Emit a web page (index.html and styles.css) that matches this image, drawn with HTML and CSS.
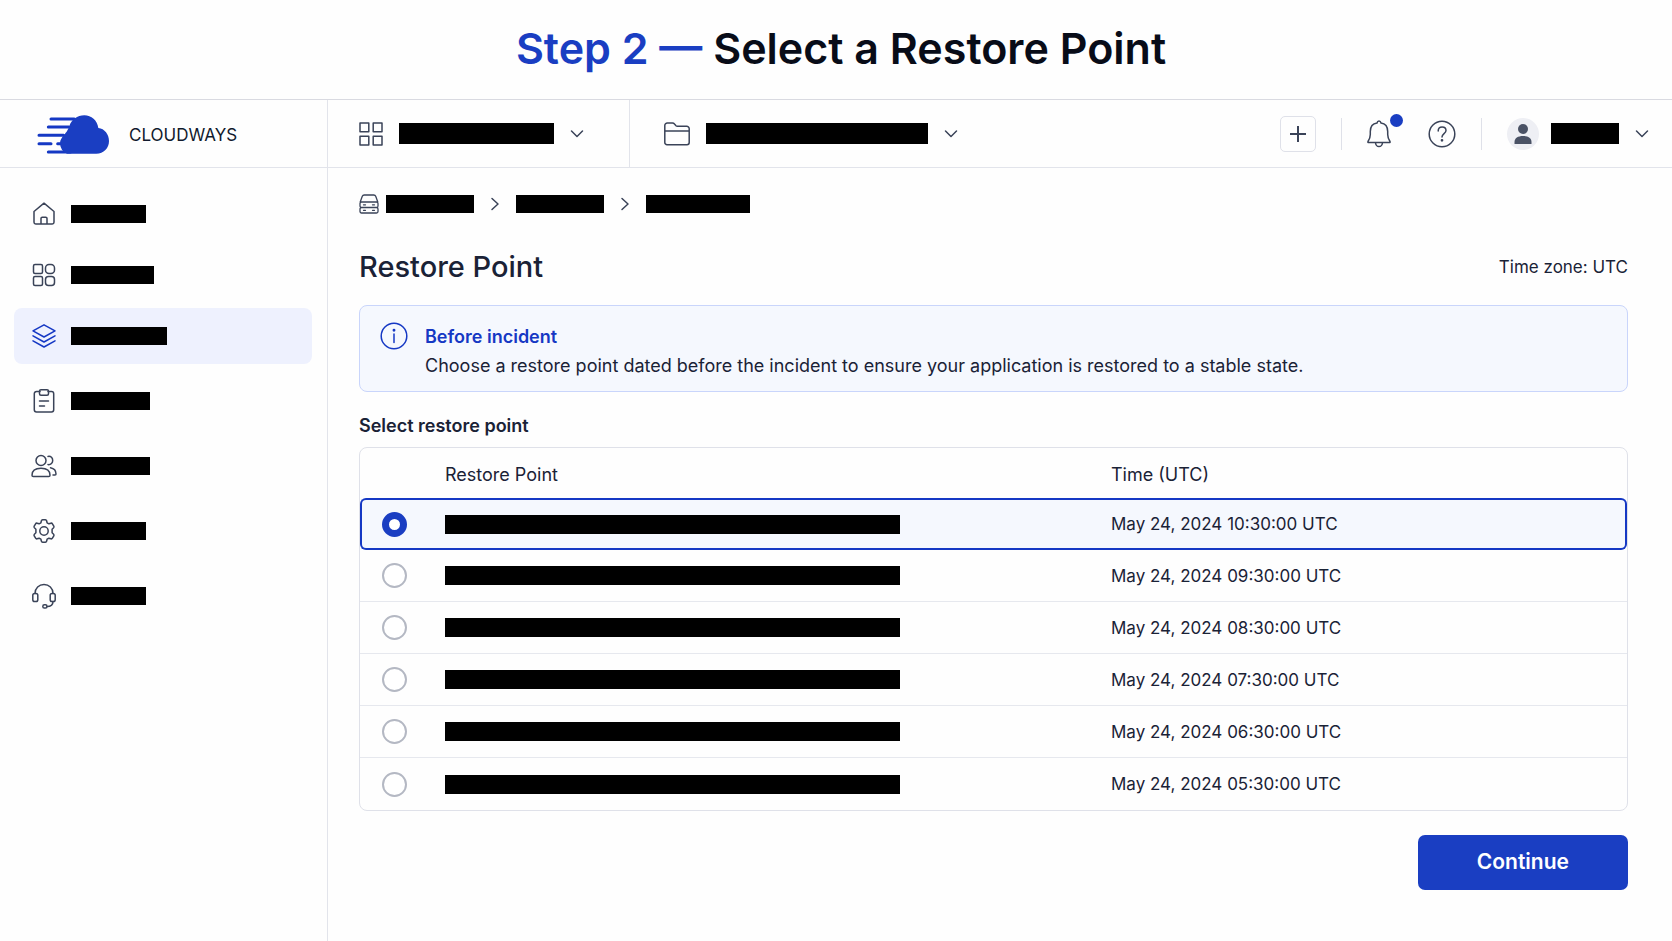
FILE: index.html
```html
<!DOCTYPE html>
<html lang="en">
<head>
<meta charset="utf-8">
<title>Restore Point - Cloudways</title>
<link rel="stylesheet" href="styles.css">
</head>
<body>
<header class="step">
  <p class="step-title"><span class="step-number">Step 2 —</span> Select a Restore Point</p>
</header>

<div class="app">
  <aside class="sidebar">
    <a class="brand" href="#">
      <svg class="brand-logo" width="72" height="39" viewBox="0 0 216 117" aria-hidden="true">
        <path d="M42 12H112M34 36H96M6 61H80M6 86H42M62 86H72M34 111H100" fill="none" stroke="#1538c4" stroke-width="9" stroke-linecap="round"/>
        <path d="M90 116C77 110 70 99 69 86C69 74 74 68 82 59C90 50 92 46 97 34C103 14 121 1 142 1C163 1 181 16 184 39C203 41 216 58 216 78C216 100 200 116 178 116Z" fill="#1a3ec2"/>
      </svg>
      <span>CLOUDWAYS</span>
    </a>
    <nav class="nav" aria-label="Main">
      <ul class="nav-list">
        <li><a class="nav-link" href="#" aria-label="Home">
          <svg class="icon" viewBox="0 0 24 24"><path d="M2 9.5 12 1.2 22 9.5V20.3a1.7 1.7 0 0 1-1.7 1.7H3.7A1.7 1.7 0 0 1 2 20.3ZM9 22v-5.5a1.3 1.3 0 0 1 1.3-1.3h3.4a1.3 1.3 0 0 1 1.3 1.3V22"/></svg>
          <span class="bar bar-75"></span></a></li>
        <li><a class="nav-link" href="#" aria-label="Applications">
          <svg class="icon" viewBox="0 0 24 24"><rect x="1.5" y="1.5" width="9" height="9" rx="1.5"/><rect x="13.5" y="1.5" width="9" height="9" rx="3.5"/><rect x="1.5" y="13.5" width="9" height="9" rx="1.5"/><rect x="13.5" y="13.5" width="9" height="9" rx="3"/></svg>
          <span class="bar bar-83"></span></a></li>
        <li><a class="nav-link active" href="#" aria-label="Backups" aria-current="page">
          <svg class="icon" viewBox="0 0 24 24"><path d="M12 .8 23 6.9 12 13 1 6.9ZM1 11.8l11 6.2 11-6.2M1 16.8 12 23l11-6.2"/></svg>
          <span class="bar bar-96"></span></a></li>
      </ul>
      <ul class="nav-list nav-more">
        <li><a class="nav-link" href="#" aria-label="Reports">
          <svg class="icon" viewBox="0 0 24 24"><path d="M8 2.5H4.5a2.2 2.2 0 0 0-2.2 2.2v16.100A2.200 2.200 0 0 0 4.500 23h15a2.200 2.200 0 0 0 2.200-2.200V4.700a2.200 2.200 0 0 0-2.200-2.200H16M7.500 12h9M7.500 17h5"/><rect x="7.5" y=".8" width="9" height="5.5" rx="1.5"/></svg>
          <span class="bar bar-79"></span></a></li>
        <li><a class="nav-link" href="#" aria-label="Team">
          <svg class="icon" viewBox="0 0 24 24"><circle cx="9" cy="6.5" r="5"/><path d="M0 21.2c0-4.500 3.500-7 9-7s9 2.500 9 7c0 .8-.5 1.300-1.300 1.300H1.300C.5 22.500 0 22 0 21.200ZM16 2.400c3-.6 4.700 1.700 4.700 4s-1.700 4.500-4.700 4.200M18.500 13.800c3 .6 5.500 3 5.500 6.200 0 .7-.4 1-1 1h-2"/></svg>
          <span class="bar bar-79"></span></a></li>
        <li><a class="nav-link" href="#" aria-label="Settings">
          <svg class="icon" viewBox="0 0 24 24"><path d="M9.400 1.800Q9.600.8 10.600.8h2.800q1 0 1.200 1l.5 2 1.800 1 2-.6q1-.3 1.500.6l1.400 2.400q.5.900-.2 1.600L20.100 10.200v3.600l1.500 1.400q.7.700.2 1.600l-1.400 2.400q-.5.900-1.500.6l-2-.6-1.800 1-.5 2q-.2 1-1.200 1h-2.800q-1 0-1.200-1l-.5-2-1.800-1-2 .6q-1 .3-1.500-.6L2.200 16.800q-.5-.9.2-1.600L3.900 13.800v-3.600L2.400 8.800q-.7-.7-.2-1.600L3.600 4.800q.5-.9 1.500-.6l2 .6 1.800-1Z"/><circle cx="12" cy="12" r="4.2"/></svg>
          <span class="bar bar-75"></span></a></li>
        <li><a class="nav-link" href="#" aria-label="Support">
          <svg class="icon" viewBox="0 0 24 24"><path d="M3 9.500C3 4 7 .5 12 .5s9 3.500 9 9M21 17.500c0 3.500-2.500 5-6 5"/><rect x=".8" y="9.5" width="5" height="8" rx="1.8"/><rect x="18.2" y="9.5" width="5" height="8" rx="1.8"/><rect x="10.8" y="20.8" width="4.2" height="3.2" rx="1.6"/></svg>
          <span class="bar bar-75"></span></a></li>
      </ul>
    </nav>
  </aside>

  <div class="content">
    <div class="topbar">
      <button class="switcher switcher-app" type="button" aria-label="Switch application">
        <svg class="icon" viewBox="0 0 24 24"><path d="M1 1h8.800v8.800H1ZM14.200 1H23v8.800h-8.800ZM1 14.200h8.800V23H1ZM14.200 14.200H23V23h-8.800Z"/></svg>
        <span class="bar bar-tall bar-155"></span>
        <svg class="chevron" viewBox="0 0 14 14"><path d="m1.500 4 5.500 5.500L12.500 4"/></svg>
      </button>
      <button class="switcher" type="button" aria-label="Switch project">
        <svg class="icon icon-folder" viewBox="0 0 26 24"><path d="M.8 20V3.500A2.500 2.500 0 0 1 3.300 1h5.200c1 0 1.500.4 2 1l1.500 1.700q.5.500 1.300.5h9.400a2.500 2.500 0 0 1 2.500 2.500V20.500a2.200 2.200 0 0 1-2.200 2.200H3A2.200 2.200 0 0 1 .8 20.500ZM.8 9h24.400"/></svg>
        <span class="bar bar-tall bar-222"></span>
        <svg class="chevron" viewBox="0 0 14 14"><path d="m1.500 4 5.500 5.500L12.500 4"/></svg>
      </button>
      <div class="actions">
        <button class="add" type="button" aria-label="Add">
          <svg class="icon-plus" viewBox="0 0 16 16"><path d="M8 .5v15M.5 8h15"/></svg>
        </button>
        <span class="divider"></span>
        <button class="plain bell" type="button" aria-label="Notifications">
          <svg class="icon-bell" viewBox="0 0 24 28"><path d="M1 21.500c1.700-2.500 2.300-4 2.300-7v-3C3.300 6 6.500 3.500 10 3c.3-1.300 1-2 2-2s1.700.7 2 2c3.500.5 6.700 3 6.700 8.500v3c0 3 .6 4.500 2.300 7 .3.600 0 1-.7 1H1.700c-.7 0-1-.4-.7-1ZM8.500 23c.3 2 1.500 3.500 3.500 3.500s3.200-1.500 3.500-3.500"/></svg>
          <span class="dot"></span>
        </button>
        <button class="plain help" type="button" aria-label="Help">
          <svg class="icon-round" viewBox="0 0 28 28"><circle cx="14" cy="14" r="12.8"/><path d="M10.200 11c0-2.600 1.600-4 3.900-4s3.900 1.400 3.900 3.600c0 3-4 3.200-4 6.400"/><circle class="fill" cx="14" cy="20.3" r=".6"/></svg>
        </button>
        <span class="divider"></span>
        <button class="plain user" type="button" aria-label="Account">
          <svg class="avatar" width="32" height="32" viewBox="0 0 32 32"><circle cx="16" cy="16" r="16" fill="#eeeff4"/><circle cx="16" cy="11" r="5" fill="#4a5265"/><path d="M7.500 26v-2c0-4 3.500-6 8.500-6s8.500 2 8.500 6v2Z" fill="#4a5265"/></svg>
          <span class="bar bar-tall bar-68"></span>
          <svg class="chevron" viewBox="0 0 14 14"><path d="m1.500 4 5.500 5.500L12.500 4"/></svg>
        </button>
      </div>
    </div>

    <main class="main">
      <nav class="crumbs" aria-label="Breadcrumb">
        <a class="crumb" href="#" aria-label="Servers">
          <svg class="icon-server" viewBox="0 0 20 20"><path d="M1.200 8 3.300 2.300Q3.800 1 5.200 1h9.600q1.400 0 1.900 1.300L18.800 8M2.500 8h15a1.500 1.500 0 0 1 1.500 1.500v2.500a1.500 1.500 0 0 1-1.500 1.500h-15A1.500 1.500 0 0 1 1 12V9.500A1.500 1.500 0 0 1 2.500 8ZM2.500 13.500h15A1.500 1.500 0 0 1 19 15v2.500a1.500 1.500 0 0 1-1.500 1.500h-15A1.500 1.500 0 0 1 1 17.500V15a1.500 1.500 0 0 1 1.500-1.500ZM4.500 10.800h2M13.500 10.800h2M4.500 16.300h2M13.500 16.300h2"/></svg>
          <span class="bar bar-88"></span>
        </a>
        <svg class="chevron" viewBox="0 0 14 14"><path d="m4 1.500 6 5.500-6 5.500"/></svg>
        <a class="crumb" href="#" aria-label="Server"><span class="bar bar-88"></span></a>
        <svg class="chevron" viewBox="0 0 14 14"><path d="m4 1.500 6 5.500-6 5.500"/></svg>
        <a class="crumb" href="#" aria-label="Application"><span class="bar bar-104"></span></a>
      </nav>

      <div class="heading">
        <h1>Restore Point</h1>
        <span class="timezone">Time zone: UTC</span>
      </div>

      <section class="notice">
        <svg class="icon-round" viewBox="0 0 28 28"><circle cx="14" cy="14" r="12.8"/><path d="M14 12v8.500"/><circle class="fill" cx="14" cy="8.3" r=".7"/></svg>
        <div>
          <h2 class="notice-title">Before incident</h2>
          <p class="notice-text">Choose a restore point dated before the incident to ensure your application is restored to a stable state.</p>
        </div>
      </section>

      <form>
        <h2 class="label" id="points-label">Select restore point</h2>
        <div class="points">
          <table aria-labelledby="points-label">
            <colgroup><col class="col-pick"><col><col class="col-time"></colgroup>
            <thead>
              <tr><td></td><th scope="col">Restore Point</th><th scope="col">Time (UTC)</th></tr>
            </thead>
            <tbody>
              <tr class="selected">
                <td><input type="radio" name="point" id="p1" aria-labelledby="t1" checked></td>
                <td><label for="p1"><span class="bar bar-point"></span></label></td>
                <td id="t1">May 24, 2024 10:30:00 UTC</td>
              </tr>
              <tr>
                <td><input type="radio" name="point" id="p2" aria-labelledby="t2"></td>
                <td><label for="p2"><span class="bar bar-point"></span></label></td>
                <td id="t2">May 24, 2024 09:30:00 UTC</td>
              </tr>
              <tr>
                <td><input type="radio" name="point" id="p3" aria-labelledby="t3"></td>
                <td><label for="p3"><span class="bar bar-point"></span></label></td>
                <td id="t3">May 24, 2024 08:30:00 UTC</td>
              </tr>
              <tr>
                <td><input type="radio" name="point" id="p4" aria-labelledby="t4"></td>
                <td><label for="p4"><span class="bar bar-point"></span></label></td>
                <td id="t4">May 24, 2024 07:30:00 UTC</td>
              </tr>
              <tr>
                <td><input type="radio" name="point" id="p5" aria-labelledby="t5"></td>
                <td><label for="p5"><span class="bar bar-point"></span></label></td>
                <td id="t5">May 24, 2024 06:30:00 UTC</td>
              </tr>
              <tr>
                <td><input type="radio" name="point" id="p6" aria-labelledby="t6"></td>
                <td><label for="p6"><span class="bar bar-point"></span></label></td>
                <td id="t6">May 24, 2024 05:30:00 UTC</td>
              </tr>
            </tbody>
          </table>
        </div>
        <div class="form-actions">
          <button class="continue" type="submit">Continue</button>
        </div>
      </form>
    </main>
  </div>
</div>
</body>
</html>
```

FILE: styles.css
```css
* {box-sizing:border-box;}

body {
  margin:0;
  min-height:100vh;
  display:flex;
  flex-direction:column;
  font-family:Inter,"Liberation Sans",sans-serif;
  font-size:18px;
  line-height:24px;
  color:#1a2236;
  background:#fefefe;
}
h1, h2, p, ul {margin:0;padding:0;}
ul {list-style:none;}
a {color:inherit;text-decoration:none;}
button {font:inherit;color:inherit;background:none;border:0;padding:0;cursor:pointer;}
svg {flex:none;fill:none;stroke:#3a4358;stroke-width:1.5;stroke-linecap:round;stroke-linejoin:round;}

/* step banner */
.step {padding:20px 0 23px 10px;border-bottom:1px solid #d9dae1;text-align:center;}
.step-title {font-size:43px;line-height:56px;font-weight:600;color:#080c18;}
.step-number {color:#1a3ec2;}

.app {flex:1;display:flex;}
.sidebar {flex:none;width:328px;border-right:1px solid #e2e4eb;}
.content {flex:1;min-width:0;}

.brand {
  display:flex;
  align-items:center;
  gap:20px;
  height:68px;
  padding:2px 0 0 37px;
  border-bottom:1px solid #e2e4eb;
  color:#111a2e;
  font-size:17px;
}
.brand svg {stroke:none;}

/* side navigation */
.nav {padding:18px 15px 18px 14px;}
.nav-list {display:flex;flex-direction:column;gap:5px;}
.nav-more {margin-top:9px;gap:9px;}
.nav-link {
  display:flex;
  align-items:center;
  gap:15px;
  height:56px;
  padding-left:18px;
  border-radius:8px;
}
.nav-link.active {background:#eef1fe;}
.nav-link.active svg {stroke:#1538c4;}

.icon {width:24px;height:24px;overflow:visible;}
.icon-folder {width:26px;}
.icon-round {width:28px;height:28px;}
.icon-bell {width:24px;height:28px;}
.icon-plus {width:16px;height:16px;stroke-width:2;}
.icon-server {width:20px;height:20px;stroke-width:1.3;}
.chevron {width:14px;height:14px;}
.avatar {stroke:none;}
.fill {fill:#3a4358;}

/* masked names */
.bar {display:block;height:18px;background:#000;}
.bar-tall {height:21px;}
.bar-68 {width:68px;}
.bar-75 {width:75px;}
.bar-79 {width:79px;}
.bar-83 {width:83px;}
.bar-88 {width:88px;}
.bar-96 {width:96px;}
.bar-104 {width:104px;}
.bar-155 {width:155px;}
.bar-222 {width:222px;}
.bar-point {width:455px;max-width:100%;height:19px;}

/* top bar */
.topbar {display:flex;height:68px;border-bottom:1px solid #e2e4eb;}
.switcher {display:flex;align-items:center;gap:16px;padding-left:34px;}
.switcher-app {width:302px;padding-left:31px;border-right:1px solid #e2e4eb;}
.actions {display:flex;align-items:center;margin-left:auto;padding-right:23px;}
.add {
  display:flex;
  align-items:center;
  justify-content:center;
  width:36px;
  height:36px;
  border:1px solid #dfe1e9;
  border-radius:5px;
}
.divider {width:1px;height:32px;margin:0 25px;background:#dfe1e9;}
.plain {display:flex;align-items:center;}
.bell {position:relative;}
.dot {position:absolute;top:-6px;right:-12px;width:13px;height:13px;border-radius:50%;background:#1a3ec2;}
.help {margin-left:37px;}
.user {gap:12px;}
.user .chevron {margin-left:4px;}

/* page */
.main {padding:26px 44px 40px 31px;}
.crumbs {display:flex;align-items:center;gap:14px;}
.crumb {display:flex;align-items:center;gap:7px;}
.heading {display:flex;align-items:center;justify-content:space-between;margin:33px 0 18px;}
h1 {font-size:29px;line-height:40px;font-weight:500;}
.timezone {font-size:17px;}

.notice {
  display:flex;
  gap:17px;
  padding:16px 20px 11px;
  border:1px solid #c9d5fb;
  border-radius:8px;
  background:#f5f8fe;
}
.notice svg {stroke:#1538c4;}
.notice .fill {fill:#1538c4;}
.notice-title {font-size:18px;line-height:29px;font-weight:600;color:#1538c4;}
.notice-text {line-height:29px;}

.label {margin:22px 0 9px;font-size:18px;line-height:24px;font-weight:600;}
.points {border:1px solid #dfe1e9;border-radius:8px;}
table {width:100%;border-collapse:separate;border-spacing:0;table-layout:fixed;}
.col-pick {width:85px;}
.col-time {width:516px;}
th {height:50px;padding:4px 0 0;font-weight:400;text-align:left;}
td {height:52px;padding:0;border-bottom:1px solid #e6e8ee;font-size:17px;}
thead td {height:50px;border:0;}
tbody tr:last-child td {border-bottom:0;}
td:first-child {padding-left:22px;}
.selected td {background:#f5f8fe;border:solid #1538c4;border-width:2px 0;}
.selected td:first-child {padding-left:20px;border-left-width:2px;border-radius:6px 0 0 6px;}
.selected td:last-child {border-right-width:2px;border-radius:0 6px 6px 0;}

input[type=radio] {
  appearance:none;
  display:block;
  width:25px;
  height:25px;
  margin:0;
  border:2px solid #b4b8c3;
  border-radius:50%;
  background:#fff;
}
input[type=radio]:checked {border:7px solid #1a3ec2;}

.form-actions {display:flex;justify-content:flex-end;margin-top:24px;}
.continue {
  padding:15px 59px 16px;
  border-radius:7px;
  background:#1a3ec2;
  color:#fff;
  font-size:21px;
  font-weight:600;
}
```
